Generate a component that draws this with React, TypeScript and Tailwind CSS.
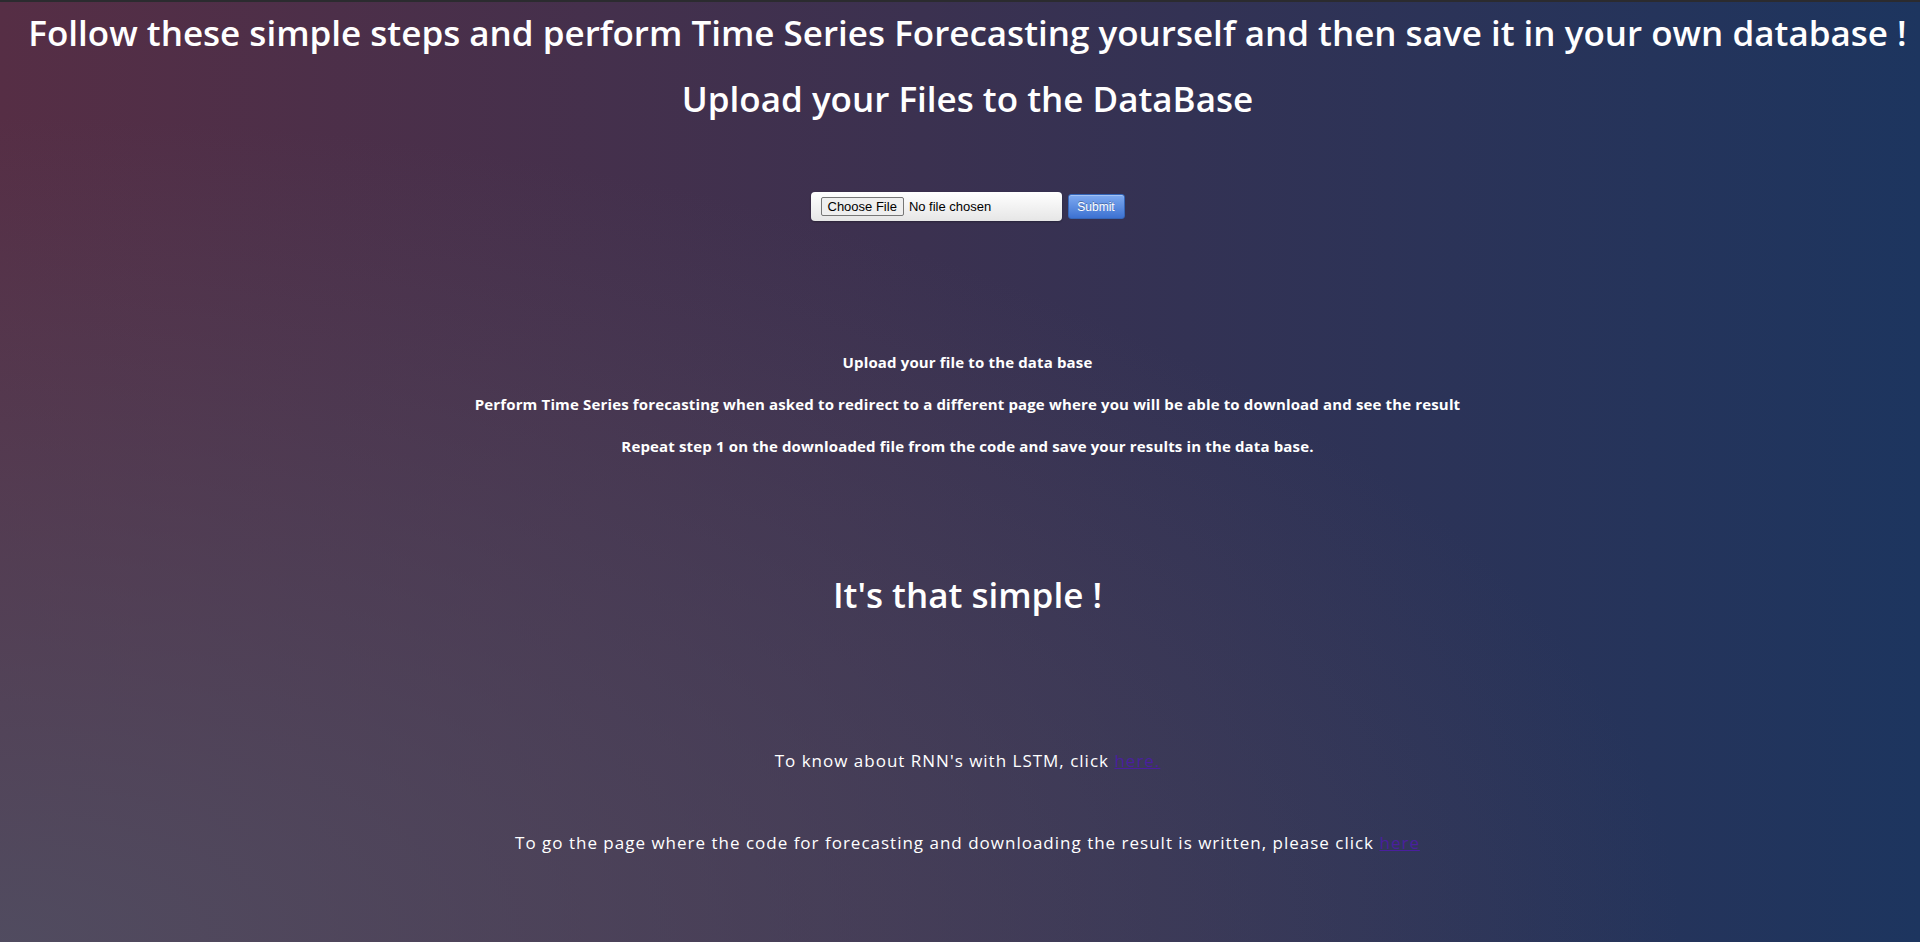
import React from "react";

const Steps = [
  "Upload your file to the data base",
  "Perform Time Series forecasting when asked to redirect to a different page where you will be able to download and see the result",
  "Repeat step 1 on the downloaded file from the code and save your results in the data base.",
];

const App: React.FC = () => {
  return (
    <div className="min-h-[942px] w-full bg-[radial-gradient(ellipse_at_bottom_left,rgba(80,78,98,0.92),rgba(80,78,98,0)_62%),linear-gradient(to_right,#562e45_0%,#3b3150_48%,#1d355f_100%)] text-white font-['Open_Sans',sans-serif] text-center">
      <div className="h-[2px] bg-[#2b2b2f]" />
      <div className="pl-[15px]">
        <h1 className="mt-[9px] text-[35px] leading-[44px] font-semibold">
          Follow these simple steps and perform Time Series Forecasting yourself and then save it in your own database !
        </h1>
        <h2 className="mt-[22px] text-[35px] leading-[44px] font-semibold">
          Upload your Files to the DataBase
        </h2>

        <form
          className="mt-[71px] flex justify-center items-center gap-[6px] font-['Liberation_Sans',Arial,sans-serif]"
          onSubmit={(e) => e.preventDefault()}
        >
          <label className="w-[251px] h-[29px] flex items-center pl-[10px] rounded-[4px] bg-[linear-gradient(to_bottom,#ffffff,#e6e6e6)] shadow-[0_1px_2px_rgba(0,0,0,0.3)] text-[13px] text-black cursor-pointer">
            <span className="h-[19px] px-[6px] flex items-center border border-[#767676] bg-[#efefef] rounded-[2px]">
              Choose File
            </span>
            <span className="ml-[5px]">No file chosen</span>
            <input type="file" className="hidden" />
          </label>
          <button
            type="submit"
            className="w-[57px] h-[25px] rounded-[3px] border border-[#3566b8] bg-[linear-gradient(to_bottom,#7eaaf0,#3d72d2)] text-[12px] text-white [text-shadow:0_-1px_0_rgba(0,0,0,0.3)] shadow-[inset_0_1px_0_rgba(255,255,255,0.3)]"
          >
            Submit
          </button>
        </form>

        <div className="mt-[131px] flex flex-col gap-[22px] text-[15px] leading-[20px] font-bold tracking-[0.15px]">
          {Steps.map((s) => (
            <p key={s}>{s}</p>
          ))}
        </div>

        <h2 className="mt-[115px] text-[35px] leading-[48px] font-semibold">It's that simple !</h2>

        <p className="mt-[130px] text-[17px] leading-[24px] tracking-[1px]">
          To know about RNN's with LSTM, click{" "}
          <a href="#" className="text-[#4a1f9e] underline">
            here.
          </a>
        </p>
        <p className="mt-[58px] text-[17px] leading-[24px] tracking-[1px]">
          To go the page where the code for forecasting and downloading the result is written, please click{" "}
          <a href="#" className="text-[#4a1f9e] underline">
            here
          </a>
        </p>
      </div>
    </div>
  );
};

export default App;
